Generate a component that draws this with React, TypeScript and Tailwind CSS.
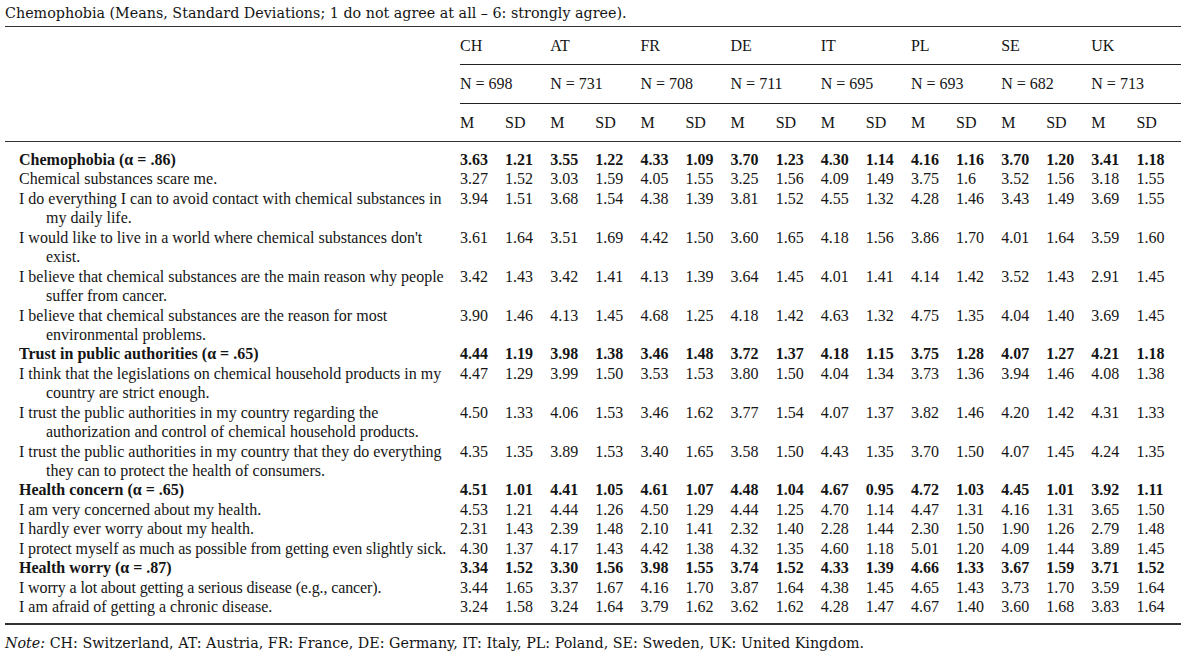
const countries = [
  { code: 'CH', n: 698 },
  { code: 'AT', n: 731 },
  { code: 'FR', n: 708 },
  { code: 'DE', n: 711 },
  { code: 'IT', n: 695 },
  { code: 'PL', n: 693 },
  { code: 'SE', n: 682 },
  { code: 'UK', n: 713 },
]

type Row = { label: string[]; bold?: boolean; v: string }

const rows: Row[] = [
  { label: ['Chemophobia (α = .86)'], bold: true, v: '3.63 1.21 3.55 1.22 4.33 1.09 3.70 1.23 4.30 1.14 4.16 1.16 3.70 1.20 3.41 1.18' },
  { label: ['Chemical substances scare me.'], v: '3.27 1.52 3.03 1.59 4.05 1.55 3.25 1.56 4.09 1.49 3.75 1.6 3.52 1.56 3.18 1.55' },
  { label: ['I do everything I can to avoid contact with chemical substances in', 'my daily life.'], v: '3.94 1.51 3.68 1.54 4.38 1.39 3.81 1.52 4.55 1.32 4.28 1.46 3.43 1.49 3.69 1.55' },
  { label: ["I would like to live in a world where chemical substances don't", 'exist.'], v: '3.61 1.64 3.51 1.69 4.42 1.50 3.60 1.65 4.18 1.56 3.86 1.70 4.01 1.64 3.59 1.60' },
  { label: ['I believe that chemical substances are the main reason why people', 'suffer from cancer.'], v: '3.42 1.43 3.42 1.41 4.13 1.39 3.64 1.45 4.01 1.41 4.14 1.42 3.52 1.43 2.91 1.45' },
  { label: ['I believe that chemical substances are the reason for most', 'environmental problems.'], v: '3.90 1.46 4.13 1.45 4.68 1.25 4.18 1.42 4.63 1.32 4.75 1.35 4.04 1.40 3.69 1.45' },
  { label: ['Trust in public authorities (α = .65)'], bold: true, v: '4.44 1.19 3.98 1.38 3.46 1.48 3.72 1.37 4.18 1.15 3.75 1.28 4.07 1.27 4.21 1.18' },
  { label: ['I think that the legislations on chemical household products in my', 'country are strict enough.'], v: '4.47 1.29 3.99 1.50 3.53 1.53 3.80 1.50 4.04 1.34 3.73 1.36 3.94 1.46 4.08 1.38' },
  { label: ['I trust the public authorities in my country regarding the', 'authorization and control of chemical household products.'], v: '4.50 1.33 4.06 1.53 3.46 1.62 3.77 1.54 4.07 1.37 3.82 1.46 4.20 1.42 4.31 1.33' },
  { label: ['I trust the public authorities in my country that they do everything', 'they can to protect the health of consumers.'], v: '4.35 1.35 3.89 1.53 3.40 1.65 3.58 1.50 4.43 1.35 3.70 1.50 4.07 1.45 4.24 1.35' },
  { label: ['Health concern (α = .65)'], bold: true, v: '4.51 1.01 4.41 1.05 4.61 1.07 4.48 1.04 4.67 0.95 4.72 1.03 4.45 1.01 3.92 1.11' },
  { label: ['I am very concerned about my health.'], v: '4.53 1.21 4.44 1.26 4.50 1.29 4.44 1.25 4.70 1.14 4.47 1.31 4.16 1.31 3.65 1.50' },
  { label: ['I hardly ever worry about my health.'], v: '2.31 1.43 2.39 1.48 2.10 1.41 2.32 1.40 2.28 1.44 2.30 1.50 1.90 1.26 2.79 1.48' },
  { label: ['I protect myself as much as possible from getting even slightly sick.'], v: '4.30 1.37 4.17 1.43 4.42 1.38 4.32 1.35 4.60 1.18 5.01 1.20 4.09 1.44 3.89 1.45' },
  { label: ['Health worry (α = .87)'], bold: true, v: '3.34 1.52 3.30 1.56 3.98 1.55 3.74 1.52 4.33 1.39 4.66 1.33 3.67 1.59 3.71 1.52' },
  { label: ['I worry a lot about getting a serious disease (e.g., cancer).'], v: '3.44 1.65 3.37 1.67 4.16 1.70 3.87 1.64 4.38 1.45 4.65 1.43 3.73 1.70 3.59 1.64' },
  { label: ['I am afraid of getting a chronic disease.'], v: '3.24 1.58 3.24 1.64 3.79 1.62 3.62 1.62 4.28 1.47 4.67 1.40 3.60 1.68 3.83 1.64' },
]

const grid = 'grid grid-cols-[455px_repeat(16,45.1px)]'

export default function App() {
  return (
    <div className="w-[1200px] h-[656px] bg-white text-[#151515] font-['Liberation_Serif',serif] text-[16px] overflow-hidden">
      <div className="pl-[5px] pt-[3px] h-[26px] leading-[20px] text-[14.3px] font-['DejaVu_Serif',serif]">
        Chemophobia (Means, Standard Deviations; 1 do not agree at all – 6: strongly agree).
      </div>

      <div className="ml-[5px] w-[1176px] border-t-[1.5px] border-[#333]">
        {/* Header */}
        <div className={grid}>
          <div />
          {countries.map((c) => (
            <div key={c.code} className="col-span-2 h-[37px] flex items-center leading-none">
              {c.code}
            </div>
          ))}
        </div>
        <div className="ml-[455px] border-t border-[#222]" />
        <div className={grid}>
          <div />
          {countries.map((c) => (
            <div key={c.code} className="col-span-2 h-[38px] flex items-center leading-none">
              N = {c.n}
            </div>
          ))}
        </div>
        <div className="ml-[455px] border-t border-[#222]" />
        <div className={grid}>
          <div />
          {countries.map((c) => [
            <div key={c.code + 'm'} className="h-[37px] flex items-center leading-none">M</div>,
            <div key={c.code + 'sd'} className="h-[37px] flex items-center leading-none">SD</div>,
          ])}
        </div>

        {/* Body */}
        <div className="border-t-[1.5px] border-[#333] pt-[8px] pb-[6px] leading-[19.43px]">
          {rows.map((r, i) => (
            <div key={i} className={`${grid} ${r.bold ? 'font-bold' : ''}`}>
              <div className="pl-[14px] whitespace-nowrap">
                {r.label.map((l, j) => (
                  <div key={j} className={j > 0 ? 'pl-[27px]' : r.label.length === 1 && l.length > 60 ? 'tracking-[-0.12px]' : ''}>
                    {l}
                  </div>
                ))}
              </div>
              {r.v.split(' ').map((x, k) => (
                <div key={k}>{x}</div>
              ))}
            </div>
          ))}
        </div>

        <div className="border-t-[2px] border-[#333] pt-[8px] leading-[20px] text-[14.3px] font-['DejaVu_Serif',serif] whitespace-nowrap">
          <span className="italic">Note:</span> CH: Switzerland, AT: Austria, FR: France, DE: Germany, IT: Italy, PL: Poland, SE: Sweden, UK: United Kingdom.
        </div>
      </div>
    </div>
  )
}
